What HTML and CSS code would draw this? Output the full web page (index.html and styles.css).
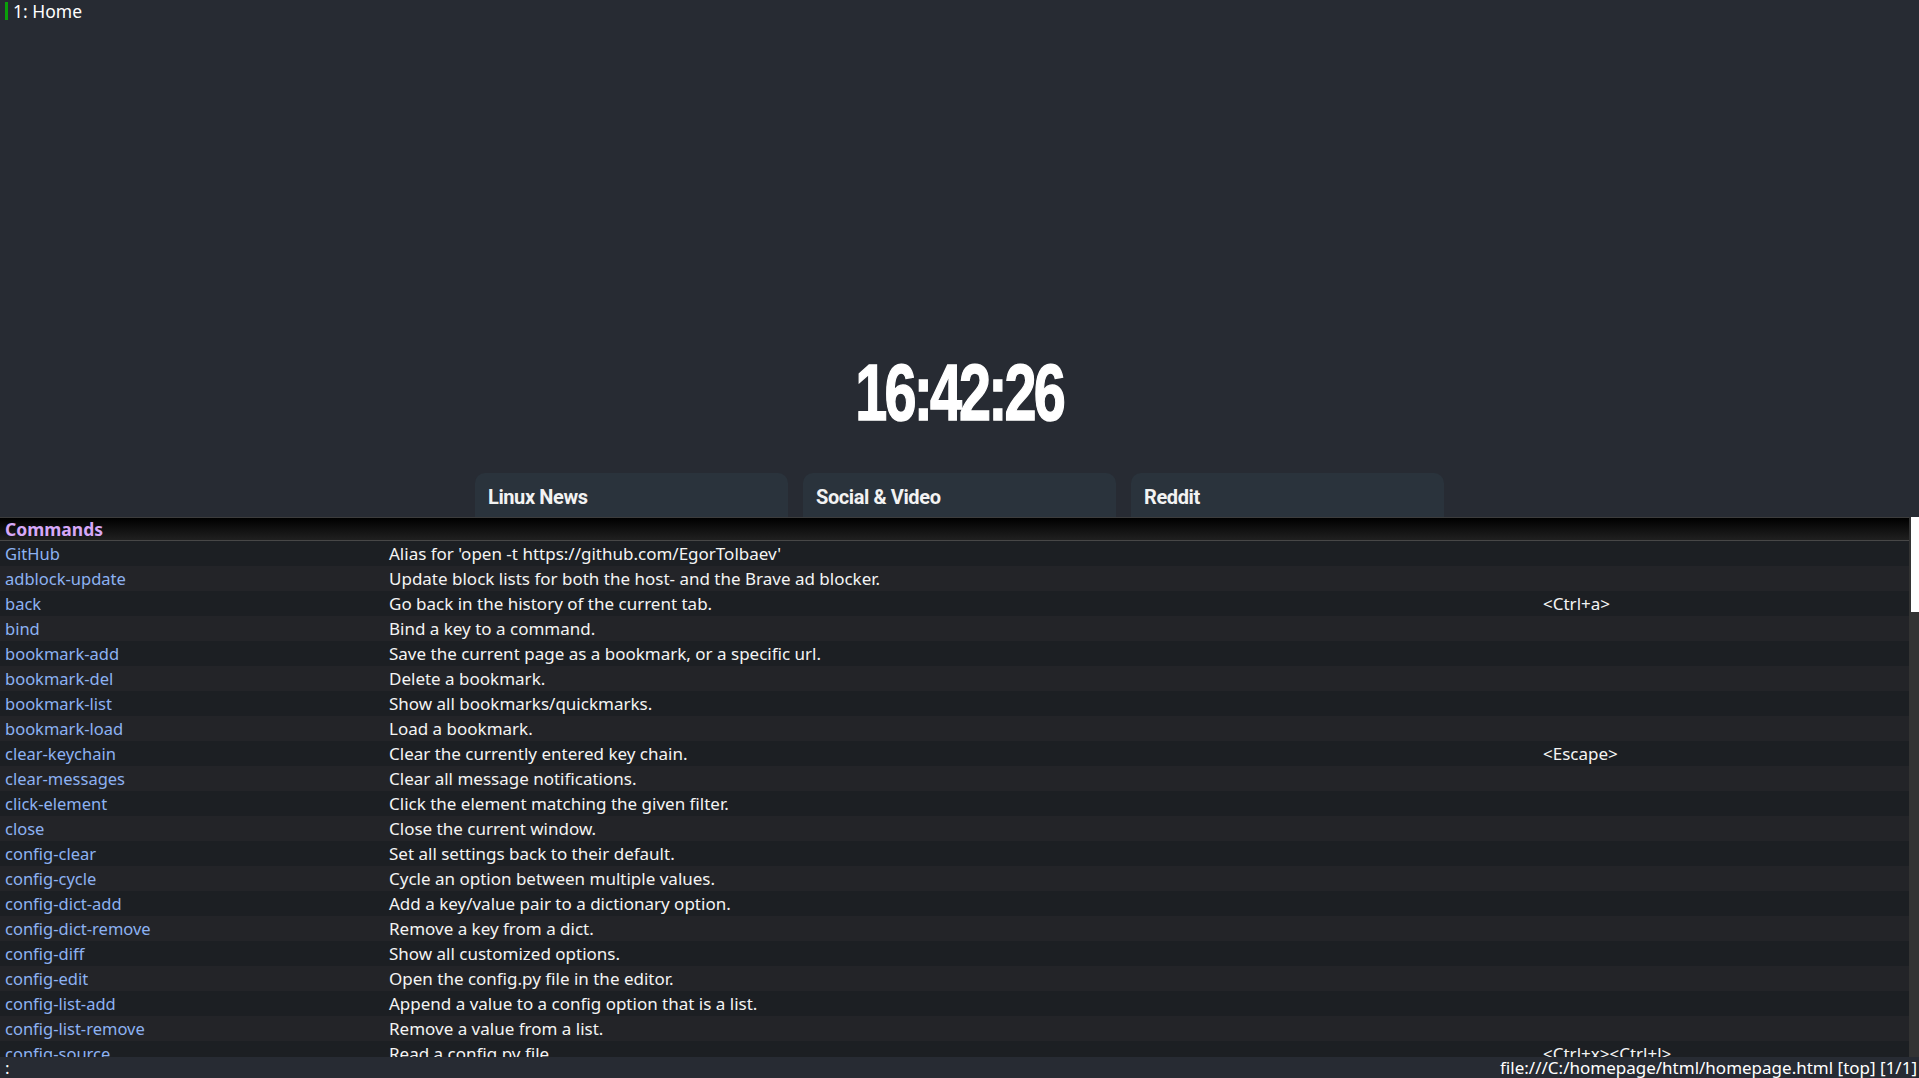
FILE: index.html
```html
<!DOCTYPE html>
<html>
<head>
<meta charset="utf-8">
<link rel="stylesheet" href="styles.css">
</head>
<body>
<div class="tabbar">
  <div class="tab"><span class="indicator"></span><span class="tab-title">1: Home</span></div>
</div>
<div class="webview">
  <div class="clock">16:42:26</div>
  <div class="cards">
    <div class="card"><div class="card-title">Linux News</div></div>
    <div class="card"><div class="card-title">Social &amp; Video</div></div>
    <div class="card"><div class="card-title">Reddit</div></div>
  </div>
</div>
<div class="completion">
  <div class="list">
    <div class="heading">Commands</div>
    <div class="row"><span class="c1">GitHub</span><span class="c2">Alias for 'open -t https://github.com/EgorTolbaev'</span><span class="c3"></span></div>
    <div class="row"><span class="c1">adblock-update</span><span class="c2">Update block lists for both the host- and the Brave ad blocker.</span><span class="c3"></span></div>
    <div class="row"><span class="c1">back</span><span class="c2">Go back in the history of the current tab.</span><span class="c3">&lt;Ctrl+a&gt;</span></div>
    <div class="row"><span class="c1">bind</span><span class="c2">Bind a key to a command.</span><span class="c3"></span></div>
    <div class="row"><span class="c1">bookmark-add</span><span class="c2">Save the current page as a bookmark, or a specific url.</span><span class="c3"></span></div>
    <div class="row"><span class="c1">bookmark-del</span><span class="c2">Delete a bookmark.</span><span class="c3"></span></div>
    <div class="row"><span class="c1">bookmark-list</span><span class="c2">Show all bookmarks/quickmarks.</span><span class="c3"></span></div>
    <div class="row"><span class="c1">bookmark-load</span><span class="c2">Load a bookmark.</span><span class="c3"></span></div>
    <div class="row"><span class="c1">clear-keychain</span><span class="c2">Clear the currently entered key chain.</span><span class="c3">&lt;Escape&gt;</span></div>
    <div class="row"><span class="c1">clear-messages</span><span class="c2">Clear all message notifications.</span><span class="c3"></span></div>
    <div class="row"><span class="c1">click-element</span><span class="c2">Click the element matching the given filter.</span><span class="c3"></span></div>
    <div class="row"><span class="c1">close</span><span class="c2">Close the current window.</span><span class="c3"></span></div>
    <div class="row"><span class="c1">config-clear</span><span class="c2">Set all settings back to their default.</span><span class="c3"></span></div>
    <div class="row"><span class="c1">config-cycle</span><span class="c2">Cycle an option between multiple values.</span><span class="c3"></span></div>
    <div class="row"><span class="c1">config-dict-add</span><span class="c2">Add a key/value pair to a dictionary option.</span><span class="c3"></span></div>
    <div class="row"><span class="c1">config-dict-remove</span><span class="c2">Remove a key from a dict.</span><span class="c3"></span></div>
    <div class="row"><span class="c1">config-diff</span><span class="c2">Show all customized options.</span><span class="c3"></span></div>
    <div class="row"><span class="c1">config-edit</span><span class="c2">Open the config.py file in the editor.</span><span class="c3"></span></div>
    <div class="row"><span class="c1">config-list-add</span><span class="c2">Append a value to a config option that is a list.</span><span class="c3"></span></div>
    <div class="row"><span class="c1">config-list-remove</span><span class="c2">Remove a value from a list.</span><span class="c3"></span></div>
    <div class="row"><span class="c1">config-source</span><span class="c2">Read a config.py file.</span><span class="c3">&lt;Ctrl+x&gt;&lt;Ctrl+l&gt;</span></div>
  </div>
  <div class="scrollbar"><div class="handle"></div></div>
</div>
<div class="statusbar">
  <span class="cmd">:</span>
  <span class="url">file:///C:/homepage/html/homepage.html [top] [1/1]</span>
</div>
</body>
</html>
```
FILE: styles.css
```css
html, body {
  margin: 0;
  padding: 0;
}
body {
  width: 1919px;
  height: 1078px;
  overflow: hidden;
  display: flex;
  flex-direction: column;
  background: #272b33;
  color: #ffffff;
  font-family: "Noto Sans", "Open Sans", sans-serif;
  font-size: 17px;
}
.tabbar {
  height: 22px;
  flex: none;
  display: flex;
  background: #272b33;
}
.tab {
  display: flex;
  align-items: center;
  padding-left: 5px;
  gap: 5px;
}
.indicator {
  width: 3px;
  height: 18px;
  background: #0aa00a;
}
.tab-title {
  font-size: 17.5px;
  line-height: 22px;
  color: #ffffff;
}
.webview {
  height: 495px;
  flex: none;
  overflow: hidden;
  display: flex;
  flex-direction: column;
  align-items: center;
  background: #272b33;
}
.clock {
  margin-top: 331px;
  height: 80px;
  font-family: "Liberation Sans", sans-serif;
  font-weight: 700;
  font-size: 80px;
  line-height: 80px;
  letter-spacing: -4px;
  color: #ffffff;
  transform: scaleX(0.72);
  -webkit-text-stroke: 1.5px #ffffff;
}
.cards {
  margin-top: 40px;
  display: flex;
  gap: 15px;
}
.card {
  width: 313px;
  height: 120px;
  background: #2a333c;
  border-radius: 10px 10px 0 0;
  box-sizing: border-box;
  padding: 12px 13px;
}
.card-title {
  font-family: Roboto, sans-serif;
  font-weight: 700;
  font-size: 20px;
  letter-spacing: -0.4px;
  color: #f2f2f2;
}
.completion {
  height: 540px;
  flex: none;
  display: flex;
  background: #1c1f23;
}
.list {
  flex: 1;
  overflow: hidden;
  border-top: 1px solid #3c3c3c;
}
.heading {
  height: 22px;
  line-height: 22px;
  padding-left: 5px;
  font-weight: 700;
  font-size: 17.5px;
  color: #d6a8f8;
  background: linear-gradient(#000000, #202020);
  border-bottom: 1px solid #474747;
}
.row {
  display: grid;
  grid-template-columns: 384px 1154px 1fr;
  height: 25px;
  line-height: 25px;
  white-space: nowrap;
}
.row:nth-child(even) {
  background: #1c1f23;
}
.row:nth-child(odd) {
  background: #232428;
}
.row span {
  padding-left: 5px;
  overflow: hidden;
}
.c1 {
  color: #8db2f2;
  font-size: 16.5px;
}
.c2, .c3 {
  color: #f4f4f4;
}
.scrollbar {
  width: 10px;
  flex: none;
  background: #333333;
  display: flex;
  justify-content: flex-end;
}
.handle {
  width: 8px;
  height: 95px;
  background: #ffffff;
}
.statusbar {
  height: 21px;
  flex: none;
  display: flex;
  justify-content: space-between;
  background: #272b33;
  font-size: 17px;
  line-height: 21px;
  padding: 0 2px 0 5px;
}
```
